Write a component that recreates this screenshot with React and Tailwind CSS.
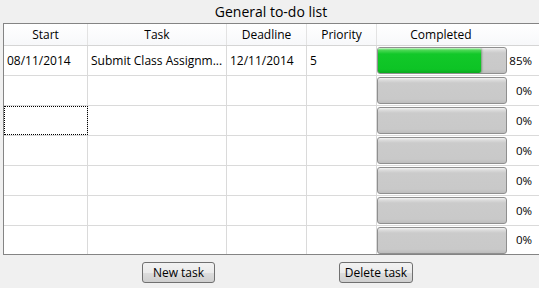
const rows = [
  { start: '08/11/2014', task: 'Submit Class Assignm...', deadline: '12/11/2014', priority: '5', pct: 85 },
  { pct: 0 },
  { pct: 0, focus: true },
  { pct: 0 },
  { pct: 0 },
  { pct: 0 },
  { pct: 0, last: true },
]

const Progress = ({ pct }) => (
  <div className="relative h-[27px] w-[130px] rounded-[3px] border border-[#8f8f8f] bg-[linear-gradient(#f4f4f4_0px,#dcdcdc_2px,#cbcbcb_5px,#c9c9c9_85%,#bdbdbd_100%)] overflow-hidden">
    {pct > 0 && (
      <div
        className="h-full rounded-r-[2px] bg-[linear-gradient(#d6f7d6_0px,#4fd957_2px,#12c829_6px,#0dc425_85%,#0aa81f_100%)] shadow-[1px_0_2px_rgba(0,80,0,0.4)]"
        style={{ width: `${pct * 0.95}%` }}
      />
    )}
  </div>
)

export default function App() {
  return (
    <div className="w-[539px] h-[288px] bg-[#f0f0f0] text-[12px] text-black font-['Open_Sans',sans-serif] overflow-hidden flex flex-col">
      <div className="h-[23px] flex items-center justify-center pl-[3px] text-[14px]">General to-do list</div>
      <div className="ml-[3px] border-l border-t border-b border-[#848484] bg-white flex flex-col">
        <div className="grid grid-cols-[84px_139px_80px_70px_1fr] h-[22px] border-b border-[#d5d5d5] bg-[linear-gradient(#ffffff,#f7f8fa)]">
          {['Start', 'Task', 'Deadline', 'Priority', 'Completed'].map((h, i) => (
            <div key={h} className={`flex items-center justify-center ${i < 4 ? 'border-r border-[#e3e3e3]' : 'pr-[34px]'}`}>
              {h}
            </div>
          ))}
        </div>
        {rows.map((r, i) => (
          <div
            key={i}
            className={`grid grid-cols-[84px_139px_80px_70px_1fr] ${r.last ? 'h-[28px]' : 'h-[30px] border-b border-[#dadada]'}`}
          >
            <div className={`flex items-center pl-[3px] border-r border-[#dadada] ${r.focus ? 'outline outline-1 outline-dotted outline-black -outline-offset-1' : ''}`}>
              {r.start}
            </div>
            <div className="flex items-center pl-[3px] border-r border-[#dadada]">{r.task}</div>
            <div className="flex items-center pl-[3px] border-r border-[#dadada]">{r.deadline}</div>
            <div className="flex items-center pl-[3px] border-r border-[#dadada]">{r.priority}</div>
            <div className="flex items-center">
              <Progress pct={r.pct} />
              <span className="flex-1 text-right pr-[7px] text-[11.5px]">{r.pct}%</span>
            </div>
          </div>
        ))}
      </div>
      <div className="flex h-[33px] items-center pt-[2px]">
        <button className="ml-[142px] w-[73px] h-[21px] rounded-[3px] border border-[#707070] bg-[linear-gradient(#f2f2f2_0%,#ebebeb_50%,#dddddd_51%,#cfcfcf_100%)] flex items-center justify-center">
          New task
        </button>
        <button className="ml-[124px] w-[74px] h-[21px] rounded-[3px] border border-[#707070] bg-[linear-gradient(#f2f2f2_0%,#ebebeb_50%,#dddddd_51%,#cfcfcf_100%)] flex items-center justify-center">
          Delete task
        </button>
      </div>
    </div>
  )
}
